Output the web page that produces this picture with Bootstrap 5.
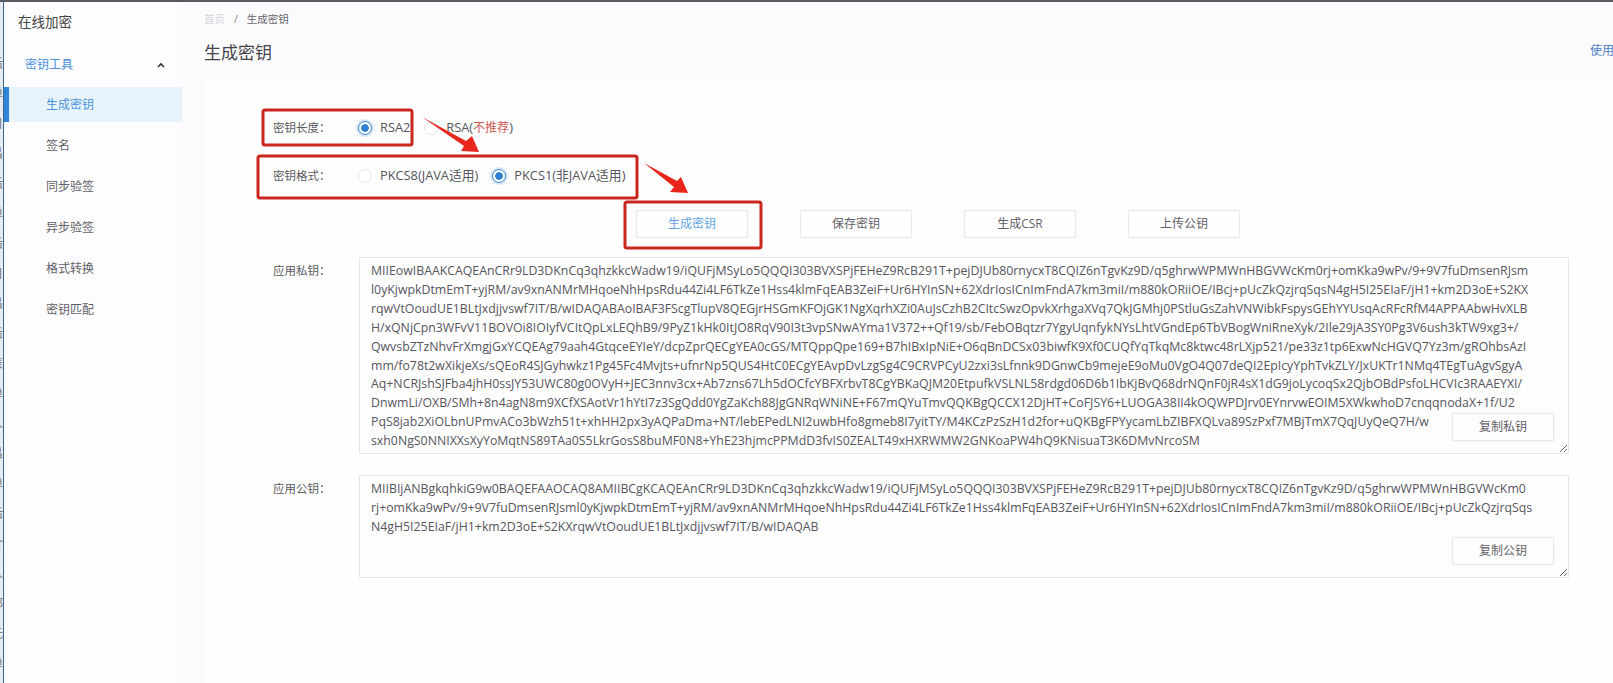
<!DOCTYPE html>
<html lang="zh-CN">

<head>
    <meta charset="UTF-8" />
    <title>生成密钥</title>
    <link href="https://cdn.jsdelivr.net/npm/bootstrap@5.3.3/dist/css/bootstrap.min.css" rel="stylesheet">
    <style>
        html, body { height: 100%; overflow: hidden; }
        body {
            font-family: "Open Sans", "Noto Sans CJK SC", sans-serif;
            font-size: 12px;
            color: #55555c;
            background: #fbfafd;
            border-top: 2px solid #5a5a60;
        }
        .page-wrap { height: 681px; width: 1613px; position: relative; overflow: hidden; }

        .win-edge {
            width: 4px;
            flex: none;
            overflow: hidden;
            background: #e6ecf2;
            border-right: 1px solid #3f6286;
            font-family: "Noto Sans CJK SC", sans-serif;
            font-size: 12px;
            line-height: 30px;
            color: #77777c;
            padding-top: 46px;
        }
        .win-edge span { display: block; margin-left: -9px; width: 14px; }

        .side { width: 178px; flex: none; background: #fdfcfe; }
        .side-title { font-size: 13.5px; color: #444; padding: 10px 0 0 14px; height: 41px; line-height: 20px; }
        .side-group { height: 44px; padding: 0 17px 0 21px; color: #4a93d8; }
        .side-link { height: 35px; margin-bottom: 6px; padding-left: 42px; color: #5f5f66; display: flex; align-items: center; }
        .side-link.active { background: #e8f3fc; color: #4a93d8; border-left: 5px solid #2f86d8; padding-left: 37px; }
        .side-link:last-child { margin-bottom: 0; }

        .content { min-width: 0; padding-left: 22px; background: #fbfafd; }
        .crumbs { font-size: 10.5px; height: 30px; margin: 0; padding-top: 10px; --bs-breadcrumb-divider-color: #888; --bs-breadcrumb-item-padding-x: 9px; }
        .crumbs .home { color: #d4d4d8; }
        .crumbs .breadcrumb-item.active { color: #66666c; }
        .head-row { height: 48px; }
        .head-row h1 { font-size: 17px; font-weight: 400; color: #44444a; margin: 0; line-height: 42px; }
        .use-link { color: #4f80c4; text-decoration: none; line-height: 38px; margin-right: -1px; }

        .panel-box { background: #fffeff; padding: 34px 0 0 69px; height: 620px; }
        .label-cell { width: 85px; flex: none; color: #5a5a60; font-size: 11.5px; }
        .form-line { height: 28px; margin-bottom: 20px; }
        .radio-opt { margin-right: 14px; gap: 8px; font-size: 12.8px; }
        .radio-opt .form-check-input {
            width: 14px; height: 14px; margin: 0; flex: none;
            border-color: #e6e6ea;
            background-color: #fff;
        }
        .radio-opt .form-check-input:checked {
            border-color: #2f86d8;
            background-color: #fff;
            background-image: radial-gradient(circle, #2f7fd0 0 3.5px, #fff 4px);
            box-shadow: 0 0 0 2px #d8e8f6;
        }
        .warn-text { color: #cc5a52; font-size: 12px; }

        .action-row { margin: 0 0 19px 363px; gap: 52px; }
        .act-btn {
            width: 112px; height: 28px; padding: 0;
            font-size: 12px; color: #5f5f66;
            background: #fffeff;
            border: 1px solid #e7e7ee;
            border-radius: 1px;
            box-shadow: 0 0 2px #eeeef2;
        }
        .act-btn.on { color: #62a5e2; }

        .key-row { margin-bottom: 21px; }
        .key-row .label-cell { width: 86px; padding-top: 5px; }
        .key-box { width: 1210px; position: relative; }
        .key-text {
            display: block;
            width: 100%;
            padding: 4px 0 0 11px;
            font-size: 12.32px;
            line-height: 18.9px;
            white-space: pre;
            overflow: hidden;
            color: #55555c;
            background: #fffeff;
            border: 1px solid #e4e4e8;
            border-radius: 1px;
        }
        .key-text.tall { height: 197px; }
        .key-text.short { height: 103px; }
        .copy-btn {
            position: absolute; right: 15px; bottom: 13px;
            width: 102px; height: 28px; padding: 0;
            font-size: 12px; color: #5f5f66;
            background: #fffeff;
            border: 1px solid #e7e7ee;
            border-radius: 1px;
            box-shadow: 0 0 2px #e8e8ec;
        }

        .marks { position: absolute; left: 0; top: -2px; pointer-events: none; }
    </style>
</head>

<body>
    <div class="page-wrap d-flex">
        <div class="win-edge" aria-hidden="true">
            <span>后</span><span>单</span><span>目</span><span>昌</span><span>后</span><span>单</span><span>后</span><span>目</span><span>昌</span><span>后</span><span>表</span><span>单</span><span>人</span><span>昌</span><span>单</span><span>后</span><span>介</span><span>人</span><span>部</span><span>元</span><span>单</span>
        </div>

        <aside class="side">
            <div class="side-title">在线加密</div>
            <div class="side-group d-flex justify-content-between align-items-center">
                <span>密钥工具</span>
                <svg width="8" height="6" viewBox="0 0 8 6"><path d="M1 5 L4 2 L7 5" fill="none" stroke="#333" stroke-width="1.6"/></svg>
            </div>
            <nav class="nav flex-column">
                <a class="side-link active text-decoration-none" href="#">生成密钥</a>
                <a class="side-link text-decoration-none" href="#">签名</a>
                <a class="side-link text-decoration-none" href="#">同步验签</a>
                <a class="side-link text-decoration-none" href="#">异步验签</a>
                <a class="side-link text-decoration-none" href="#">格式转换</a>
                <a class="side-link text-decoration-none" href="#">密钥匹配</a>
            </nav>
        </aside>

        <main class="content flex-grow-1">
            <ol class="breadcrumb crumbs">
                <li class="breadcrumb-item home">首页</li>
                <li class="breadcrumb-item active">生成密钥</li>
            </ol>
            <div class="head-row d-flex justify-content-between">
                <h1>生成密钥</h1>
                <a class="use-link" href="#">使用</a>
            </div>

            <div class="panel-box">
                <div class="form-line d-flex align-items-center">
                    <div class="label-cell">密钥长度：</div>
                    <label class="radio-opt d-flex align-items-center">
                        <input class="form-check-input" type="radio" name="keylen" checked>RSA2
                    </label>
                    <label class="radio-opt d-flex align-items-center">
                        <input class="form-check-input" type="radio" name="keylen"><span>RSA(<span class="warn-text">不推荐</span>)</span>
                    </label>
                </div>
                <div class="form-line d-flex align-items-center">
                    <div class="label-cell">密钥格式：</div>
                    <label class="radio-opt d-flex align-items-center">
                        <input class="form-check-input" type="radio" name="keyfmt">PKCS8(JAVA适用)
                    </label>
                    <label class="radio-opt d-flex align-items-center">
                        <input class="form-check-input" type="radio" name="keyfmt" checked>PKCS1(非JAVA适用)
                    </label>
                </div>

                <div class="action-row d-flex">
                    <button class="btn act-btn on" type="button">生成密钥</button>
                    <button class="btn act-btn" type="button">保存密钥</button>
                    <button class="btn act-btn" type="button">生成CSR</button>
                    <button class="btn act-btn" type="button">上传公钥</button>
                </div>

                <div class="key-row d-flex">
                    <div class="label-cell">应用私钥：</div>
                    <div class="key-box">
                        <textarea class="key-text tall" readonly>MIIEowIBAAKCAQEAnCRr9LD3DKnCq3qhzkkcWadw19/iQUFjMSyLo5QQQI303BVXSPjFEHeZ9RcB291T+pejDJUb80rnycxT8CQIZ6nTgvKz9D/q5ghrwWPMWnHBGVWcKm0rj+omKka9wPv/9+9V7fuDmsenRJsm
l0yKjwpkDtmEmT+yjRM/av9xnANMrMHqoeNhHpsRdu44Zi4LF6TkZe1Hss4klmFqEAB3ZeiF+Ur6HYInSN+62XdrIosICnImFndA7km3miI/m880kORiiOE/IBcj+pUcZkQzjrqSqsN4gH5I25EIaF/jH1+km2D3oE+S2KX
rqwVtOoudUE1BLtJxdjjvswf7IT/B/wIDAQABAoIBAF3FScgTlupV8QEGjrHSGmKFOjGK1NgXqrhXZi0AuJsCzhB2CItcSwzOpvkXrhgaXVq7QkJGMhj0PStluGsZahVNWibkFspysGEhYYUsqAcRFcRfM4APPAAbwHvXLB
H/xQNjCpn3WFvV11BOVOi8IOIyfVCItQpLxLEQhB9/9PyZ1kHk0ItJO8RqV90I3t3vpSNwAYma1V372++Qf19/sb/FebOBqtzr7YgyUqnfykNYsLhtVGndEp6TbVBogWniRneXyk/2Ile29jA3SY0Pg3V6ush3kTW9xg3+/
QwvsbZTzNhvFrXmgjGxYCQEAg79aah4GtqceEYIeY/dcpZprQECgYEA0cGS/MTQppQpe169+B7hIBxIpNiE+O6qBnDCSx03biwfK9Xf0CUQfYqTkqMc8ktwc48rLXjp521/pe33z1tp6ExwNcHGVQ7Yz3m/gROhbsAzI
mm/fo78t2wXikjeXs/sQEoR4SJGyhwkz1Pg45Fc4Mvjts+ufnrNp5QUS4HtC0ECgYEAvpDvLzgSg4C9CRVPCyU2zxi3sLfnnk9DGnwCb9mejeE9oMu0VgO4Q07deQI2EpIcyYphTvkZLY/JxUKTr1NMq4TEgTuAgvSgyA
Aq+NCRJshSJFba4jhH0ssJY53UWC80g0OVyH+JEC3nnv3cx+Ab7zns67Lh5dOCfcYBFXrbvT8CgYBKaQJM20EtpufkVSLNL58rdgd06D6b1IbKjBvQ68drNQnF0jR4sX1dG9joLycoqSx2QjbOBdPsfoLHCVIc3RAAEYXI/
DnwmLi/OXB/SMh+8n4agN8m9XCfXSAotVr1hYtI7z3SgQdd0YgZaKch88JgGNRqWNiNE+F67mQYuTmvQQKBgQCCX12DjHT+CoFJSY6+LUOGA38II4kOQWPDJrv0EYnrvwEOIM5XWkwhoD7cnqqnodaX+1f/U2
PqS8jab2XiOLbnUPmvACo3bWzh51t+xhHH2px3yAQPaDma+NT/lebEPedLNI2uwbHfo8gmeb8I7yitTY/M4KCzPzSzH1d2for+uQKBgFPYycamLbZIBFXQLva89SzPxf7MBjTmX7QqJUyQeQ7H/w
sxh0NgS0NNIXXsXyYoMqtNS89TAa0S5LkrGosS8buMF0N8+YhE23hjmcPPMdD3fvIS0ZEALT49xHXRWMW2GNKoaPW4hQ9KNisuaT3K6DMvNrcoSM</textarea>
                        <button class="btn copy-btn" type="button">复制私钥</button>
                    </div>
                </div>

                <div class="key-row d-flex">
                    <div class="label-cell">应用公钥：</div>
                    <div class="key-box">
                        <textarea class="key-text short" readonly>MIIBIjANBgkqhkiG9w0BAQEFAAOCAQ8AMIIBCgKCAQEAnCRr9LD3DKnCq3qhzkkcWadw19/iQUFjMSyLo5QQQI303BVXSPjFEHeZ9RcB291T+pejDJUb80rnycxT8CQIZ6nTgvKz9D/q5ghrwWPMWnHBGVWcKm0
rj+omKka9wPv/9+9V7fuDmsenRJsml0yKjwpkDtmEmT+yjRM/av9xnANMrMHqoeNhHpsRdu44Zi4LF6TkZe1Hss4klmFqEAB3ZeiF+Ur6HYInSN+62XdrIosICnImFndA7km3miI/m880kORiiOE/IBcj+pUcZkQzjrqSqs
N4gH5I25EIaF/jH1+km2D3oE+S2KXrqwVtOoudUE1BLtJxdjjvswf7IT/B/wIDAQAB</textarea>
                        <button class="btn copy-btn" type="button">复制公钥</button>
                    </div>
                </div>
            </div>
        </main>

        <!-- red annotations drawn over the page -->
        <svg class="marks" width="1613" height="683" viewBox="0 0 1613 683">
            <g fill="none" stroke="#c9261d" stroke-width="3">
                <rect x="263" y="110" width="149" height="35" rx="2"/>
                <rect x="258" y="156" width="379" height="42" rx="2"/>
                <rect x="625" y="202" width="136" height="46" rx="2"/>
            </g>
            <g fill="#e8261c">
                <polygon points="422,117 466,141 472,136 479,152 461,151 464,146"/>
                <polygon points="644,163 677,181 681,177 688,193 670,192 674,187"/>
            </g>
        </svg>
    </div>

    <script src="https://cdn.jsdelivr.net/npm/bootstrap@5.3.3/dist/js/bootstrap.bundle.min.js"></script>
</body>

</html>
